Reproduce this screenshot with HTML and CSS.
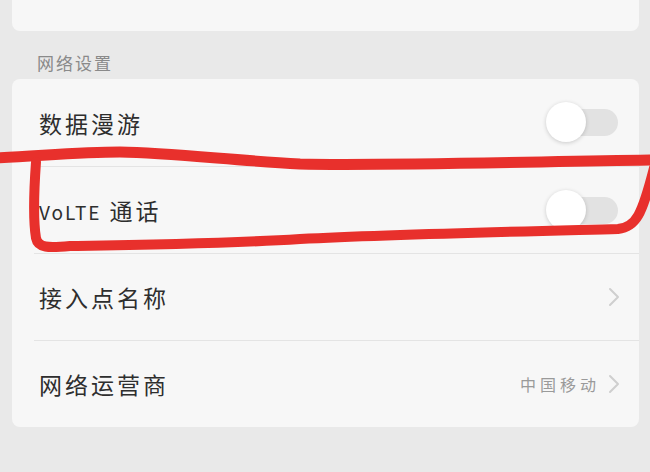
FILE: index.html
```html
<!DOCTYPE html>
<html lang="zh-CN">
<head>
<meta charset="utf-8">
<title>网络设置</title>
<link rel="stylesheet" href="styles.css">
</head>
<body>
<div class="page">
  <div class="card card-top"></div>
  <div class="section-title">网络设置</div>
  <div class="card">
    <div class="row">
      <span class="label">数据漫游</span>
      <span class="switch"><span class="knob"></span></span>
    </div>
    <div class="row">
      <span class="label"><span class="latin">VoLTE</span> 通话</span>
      <span class="switch"><span class="knob"></span></span>
    </div>
    <div class="row">
      <span class="label">接入点名称</span>
      <span class="chev"><svg width="12" height="20" viewBox="0 0 12 20"><path d="M2 2 L10 10 L2 18" fill="none" stroke="#cfcfcf" stroke-width="2" stroke-linecap="round" stroke-linejoin="round"/></svg></span>
    </div>
    <div class="row">
      <span class="label">网络运营商</span>
      <span class="value">中国移动</span>
      <span class="chev"><svg width="12" height="20" viewBox="0 0 12 20"><path d="M2 2 L10 10 L2 18" fill="none" stroke="#cfcfcf" stroke-width="2" stroke-linecap="round" stroke-linejoin="round"/></svg></span>
    </div>
  </div>
</div>
<svg class="ink" width="650" height="472" viewBox="0 0 650 472">
  <path d="M-5 158 C 40 156, 80 152, 120 152 C 170 153, 230 160, 300 164 C 380 166, 520 162, 655 160" fill="none" stroke="#e8302c" stroke-width="11" stroke-linecap="round"/>
  <path d="M36 162 C 34 190, 33 220, 36 238 C 38 248, 48 248, 70 246 C 140 245, 220 244, 300 239 C 400 234, 540 231, 618 229 C 636 227, 642 215, 654 168" fill="none" stroke="#e8302c" stroke-width="10" stroke-linecap="round" stroke-linejoin="round"/>
</svg>
</body>
</html>
```
FILE: styles.css
```css
html, body {
  margin: 0;
  padding: 0;
}
body {
  background: #e9e9e9;
  width: 650px;
  height: 472px;
  overflow: hidden;
  position: relative;
  font-family: "Noto Sans CJK SC", "Noto Sans", sans-serif;
}
.page {
  padding: 0 11px 0 12px;
}
.card {
  background: #f7f7f7;
  border-radius: 8px;
}
.card-top {
  height: 31px;
  border-radius: 0 0 8px 8px;
}
.section-title {
  height: 48px;
  display: flex;
  align-items: center;
  padding-left: 25px;
  padding-top: 14px;
  box-sizing: border-box;
  font-size: 17px;
  letter-spacing: 2px;
  color: #8a8a8a;
}
.row {
  height: 87px;
  margin-left: 22px;
  padding-left: 5px;
  padding-right: 19px;
  display: flex;
  align-items: center;
  box-sizing: border-box;
}
.row + .row {
  border-top: 1px solid #e4e4e4;
}
.label {
  flex: 1;
  font-size: 23px;
  letter-spacing: 3px;
  color: #2e2e2e;
}
.latin {
  font-size: 19px;
  letter-spacing: 2px;
}
.value {
  font-size: 16px;
  letter-spacing: 4px;
  color: #9a9a9a;
  margin-right: 8px;
}
.chev {
  display: flex;
  align-items: center;
}
.switch {
  position: relative;
  width: 68px;
  height: 27px;
  border-radius: 14px;
  background: #e2e2e2;
  margin-right: 2px;
}
.knob {
  position: absolute;
  left: -4px;
  top: -7px;
  width: 40px;
  height: 40px;
  border-radius: 50%;
  background: #ffffff;
  box-shadow: 0 1px 4px rgba(0, 0, 0, 0.18);
}
.ink {
  position: absolute;
  left: 0;
  top: 0;
  pointer-events: none;
}
```
